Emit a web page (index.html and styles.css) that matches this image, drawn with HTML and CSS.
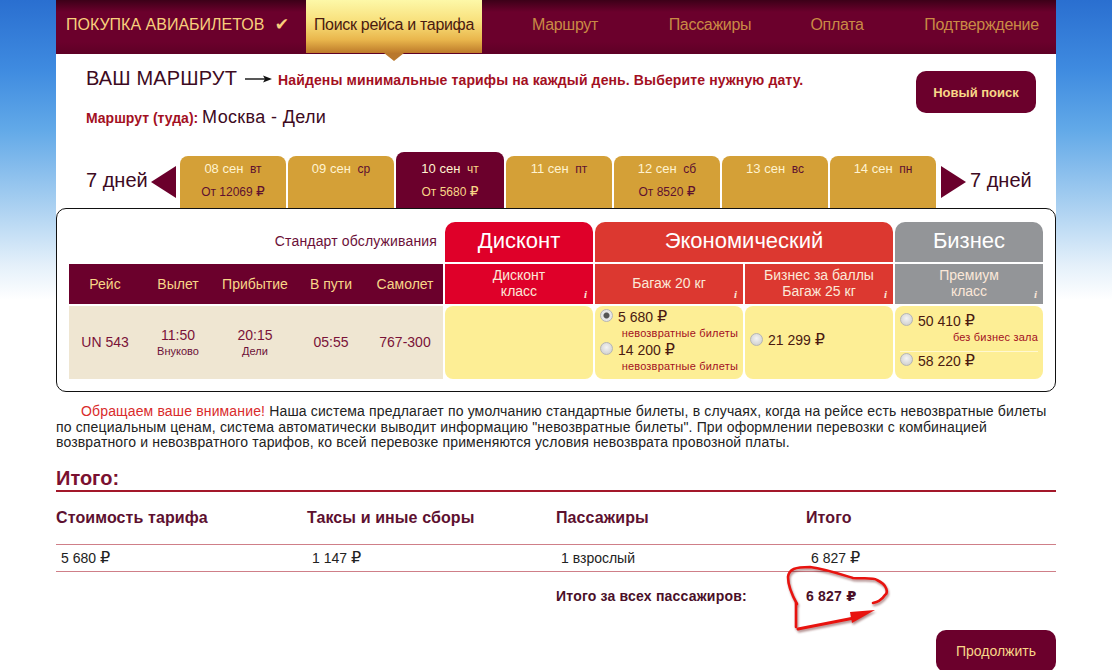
FILE: index.html
```html
<!DOCTYPE html>
<html lang="ru">
<head>
    <meta charset="UTF-8">
    <meta name="viewport" content="width=device-width, initial-scale=1.0">
    <title>Покупка авиабилетов</title>
    <link rel="stylesheet" href="styles.css">
</head>
<body>
    <div class="page">
        <nav class="steps">
            <div class="brand">ПОКУПКА АВИАБИЛЕТОВ <span class="check">✔</span></div>
            <div class="step step-active">Поиск рейса и тарифа</div>
            <div class="step step-route">Маршрут</div>
            <div class="step step-pass">Пассажиры</div>
            <div class="step step-pay">Оплата</div>
            <div class="step step-done">Подтверждение</div>
        </nav>

        <section class="route">
            <div class="route-info">
                <div class="route-title">
                    <h1>ВАШ МАРШРУТ</h1>
                    <svg class="long-arrow" width="27" height="10" viewBox="0 0 27 10">
                        <path d="M0 5H20" stroke="#111" stroke-width="1.4"/>
                        <path d="M18 1.5L27 5L18 8.5L20 5Z" fill="#111"/>
                    </svg>
                    <p class="route-note">Найдены минимальные тарифы на каждый день. Выберите нужную дату.</p>
                </div>
                <div class="route-line"><b>Маршрут (туда):</b> <span>Москва - Дели</span></div>
            </div>
            <button type="button" class="btn btn-new">Новый поиск</button>
        </section>

        <section class="days">
            <span class="days-label">7 дней</span>
            <span class="tri tri-left"></span>
            <div class="day-tabs">
                <div class="day"><div class="day-date">08 сен <em>вт</em></div><div class="day-price">От 12069 <i class="rub">₽</i></div></div>
                <div class="day"><div class="day-date">09 сен <em>ср</em></div></div>
                <div class="day day-active"><div class="day-date">10 сен <em>чт</em></div><div class="day-price">От 5680 <i class="rub">₽</i></div></div>
                <div class="day"><div class="day-date">11 сен <em>пт</em></div></div>
                <div class="day"><div class="day-date">12 сен <em>сб</em></div><div class="day-price">От 8520 <i class="rub">₽</i></div></div>
                <div class="day"><div class="day-date">13 сен <em>вс</em></div></div>
                <div class="day"><div class="day-date">14 сен <em>пн</em></div></div>
            </div>
            <span class="tri tri-right"></span>
            <span class="days-label days-label-right">7 дней</span>
        </section>

        <section class="board">
            <div class="service-label">Стандарт обслуживания</div>
            <div class="cabin cabin-discount">Дисконт</div>
            <div class="cabin cabin-eco">Экономический</div>
            <div class="cabin cabin-biz">Бизнес</div>

            <div class="flight-head flight-cols">
                <span>Рейс</span><span>Вылет</span><span>Прибытие</span><span>В пути</span><span>Самолет</span>
            </div>
            <div class="fare fare-discount"><span>Дисконт<br>класс</span><i class="info">i</i></div>
            <div class="fare fare-eco"><span>Багаж 20 кг</span><i class="info">i</i></div>
            <div class="fare fare-eco"><span>Бизнес за баллы<br>Багаж 25 кг</span><i class="info">i</i></div>
            <div class="fare fare-biz"><span>Премиум<br>класс</span><i class="info">i</i></div>

            <div class="flight-row flight-cols">
                <span>UN 543</span>
                <span>11:50<small>Внуково</small></span>
                <span>20:15<small>Дели</small></span>
                <span>05:55</span>
                <span>767-300</span>
            </div>
            <div class="cell"></div>
            <div class="cell cell-two">
                <label class="opt"><input type="radio" name="fare" checked><span>5 680 <i class="rub">₽</i></span></label>
                <div class="opt-note">невозвратные билеты</div>
                <label class="opt"><input type="radio" name="fare"><span>14 200 <i class="rub">₽</i></span></label>
                <div class="opt-note">невозвратные билеты</div>
            </div>
            <div class="cell cell-one">
                <label class="opt"><input type="radio" name="fare"><span>21 299 <i class="rub">₽</i></span></label>
            </div>
            <div class="cell cell-biz">
                <div class="biz-top">
                    <label class="opt"><input type="radio" name="fare"><span>50 410 <i class="rub">₽</i></span></label>
                    <div class="opt-note">без бизнес зала</div>
                </div>
                <label class="opt"><input type="radio" name="fare"><span>58 220 <i class="rub">₽</i></span></label>
            </div>
        </section>

        <p class="notice"><span>Обращаем ваше внимание!</span> Наша система предлагает по умолчанию стандартные билеты, в случаях, когда на рейсе есть невозвратные билеты по специальным ценам, система автоматически выводит информацию "невозвратные билеты". При оформлении перевозки с комбинацией возвратного и невозвратного тарифов, ко всей перевозке применяются условия невозврата провозной платы.</p>

        <section class="total">
            <h2>Итого:</h2>
            <div class="total-cols total-head">
                <span>Стоимость тарифа</span><span>Таксы и иные сборы</span><span>Пассажиры</span><span>Итого</span>
            </div>
            <div class="total-cols total-row">
                <span>5 680 <i class="rub">₽</i></span><span>1 147 <i class="rub">₽</i></span><span>1 взрослый</span><span>6 827 <i class="rub">₽</i></span>
            </div>
            <div class="total-cols total-sum">
                <span></span><span></span><span>Итого за всех пассажиров:</span><span class="sum-value">6 827 <i class="rub">₽</i></span>
            </div>
            <svg class="scribble" width="110" height="78" viewBox="0 0 110 78">
                <path d="M17 47C12 38 8 30 8 20C9 12 15 10 30 10C45 12 60 17 73 21C82 22 92 20 97 23C108 28 108 36 105 38C101 44 97 45 93 46" fill="none" stroke="#e8130f" stroke-width="2.6" stroke-linecap="round"/>
                <path d="M16 46V70" fill="none" stroke="#e8130f" stroke-width="2.6" stroke-linecap="round"/>
                <path d="M18 72L74 61" fill="none" stroke="#e8130f" stroke-width="3" stroke-linecap="round"/>
                <path d="M70 55L95 53L72 66Z" fill="#e8130f"/>
            </svg>
            <div class="total-actions">
                <button type="button" class="btn btn-next">Продолжить</button>
            </div>
        </section>
    </div>
</body>
</html>
```

FILE: styles.css
```css
* {
    box-sizing: border-box;
    margin: 0;
    padding: 0;
}

html, body {
    height: 100%;
}

body {
    background: #fff linear-gradient(180deg, #2a6fd0 0, #3f8be0 70px, #62a9e8 130px, #a4cdf0 200px, #e4f0fa 265px, #fff 300px) no-repeat;
    background-size: 100% 300px;
    font-family: "Liberation Sans", Arial, sans-serif;
    color: #222;
    overflow: hidden;
}

.page {
    width: 1000px;
    min-height: 670px;
    margin: 0 auto;
    background: #fff;
}

.rub {
    font-family: "DejaVu Sans", sans-serif;
    font-style: normal;
    font-weight: normal;
    font-size: 1.15em;
    line-height: 1;
}

/* top steps */
.steps {
    position: relative;
    display: flex;
    height: 54px;
    background: linear-gradient(180deg, #3c0018 0, #6b002c 12px, #6b002c 42px, #5e0026 54px);
    font-size: 16px;
    line-height: 49px;
    color: #c98a45;
}

.brand {
    width: 250px;
    padding-left: 10px;
    color: #f8cf7c;
    white-space: nowrap;
}

.check {
    margin-left: 6px;
    font-family: "DejaVu Sans", sans-serif;
    font-size: 17px;
}

.step {
    letter-spacing: -0.3px;
    text-align: center;
    white-space: nowrap;
}

.step-active {
    position: relative;
    width: 176px;
    height: 53px;
    color: #4a1a10;
    background: linear-gradient(180deg, #fdf8a8 0, #f8e07c 40%, #e9b64c 75%, #bd7a2a 100%);
}

.step-active::after {
    content: "";
    position: absolute;
    left: 78px;
    top: 53px;
    border-left: 10px solid transparent;
    border-right: 10px solid transparent;
    border-top: 8px solid #b9782c;
}

.step-route { width: 166px; }
.step-pass { width: 124px; }
.step-pay { width: 130px; }
.step-done { width: 154px; padding-left: 5px; }

/* route */
.route {
    display: flex;
    justify-content: space-between;
    height: 98px;
    padding: 12px 20px 0 30px;
}

.route-title {
    display: flex;
    align-items: center;
    height: 24px;
}

.route-title h1 {
    font-size: 20px;
    font-weight: normal;
    color: #3d0a22;
    letter-spacing: 0.15px;
}

.long-arrow {
    margin: 2px 6px 0 8px;
}

.route-note {
    margin-top: 4px;
    font-size: 14px;
    font-weight: bold;
    color: #a3101f;
    letter-spacing: 0.12px;
    white-space: nowrap;
}

.route-line {
    margin-top: 15px;
    line-height: 24px;
    font-size: 14px;
    color: #a3101f;
}

.route-line span {
    font-size: 18px;
    letter-spacing: 0.35px;
    color: #3d0a22;
}

.btn {
    border: none;
    background: #6b002c;
    color: #f8d688;
    font-family: inherit;
    font-size: 14px;
    cursor: pointer;
}

.btn-new {
    width: 120px;
    height: 42px;
    margin-top: 5px;
    border-radius: 10px;
    font-weight: bold;
    font-size: 13px;
}

/* days */
.days {
    display: flex;
    align-items: flex-end;
    height: 56px;
    padding-left: 30px;
}

.days-label {
    align-self: center;
    width: 65px;
    font-size: 20px;
    color: #3d0a22;
    white-space: nowrap;
}

.days-label-right {
    margin-left: 4px;
}

.tri {
    align-self: center;
    margin-top: 4px;
    border-top: 16px solid transparent;
    border-bottom: 16px solid transparent;
}

.tri-left {
    border-right: 25px solid #6b002c;
}

.tri-right {
    margin-left: 5px;
    border-left: 25px solid #6b002c;
}

.day-tabs {
    display: flex;
    gap: 2px;
    align-items: flex-end;
    margin-left: 4px;
}

.day {
    width: 106px;
    height: 52px;
    padding-top: 5px;
    border-radius: 8px 8px 0 0;
    background: #d4a037;
    color: #fff3d0;
    font-size: 13px;
    text-align: center;
    line-height: 16px;
}

.day em {
    margin-left: 3px;
    font-size: 12px;
    font-style: normal;
    color: #5d1030;
}

.day-price {
    margin-top: 7px;
    font-size: 12px;
    color: #5d1030;
}

.day-active {
    width: 108px;
    height: 56px;
    padding-top: 9px;
    background: #6b002c;
}

.day-active em,
.day-active .day-price {
    color: #f8d688;
}

/* fare table */
.board {
    display: grid;
    grid-template-columns: 374px repeat(4, 148px);
    grid-template-rows: 40px 40px 73px;
    column-gap: 2px;
    row-gap: 2px;
    height: 184px;
    padding: 13px 12px 0;
    border: 1px solid #111;
    border-radius: 10px;
    background: #fff;
}

.service-label {
    padding-right: 6px;
    line-height: 39px;
    font-size: 14px;
    letter-spacing: 0.15px;
    text-align: right;
    color: #6b1038;
}

.cabin {
    color: #fff;
    font-size: 22px;
    line-height: 38px;
    text-align: center;
    border-radius: 10px 10px 0 0;
}

.cabin-discount { background: #df0029; }
.cabin-eco { grid-column: span 2; background: #dc3830; }
.cabin-biz { background: #939598; }

.flight-cols {
    display: grid;
    grid-template-columns: 72px 74px 80px 72px 76px;
    text-align: center;
}

.flight-head {
    background: #6b002c;
    color: #f8d688;
    font-size: 14px;
    line-height: 40px;
}

.fare {
    position: relative;
    display: flex;
    align-items: center;
    justify-content: center;
    padding-bottom: 2px;
    color: #fbe8d8;
    font-size: 14px;
    line-height: 16px;
    text-align: center;
}

.fare-discount { background: #df0029; }
.fare-eco { background: #dc3830; }
.fare-biz { background: #939598; }

.info {
    position: absolute;
    right: 6px;
    bottom: 2px;
    font-family: "Liberation Serif", serif;
    font-size: 11px;
    font-weight: bold;
}

.flight-row {
    align-items: center;
    background: #efe6d2;
    color: #7a1238;
    font-size: 14px;
    line-height: 17px;
}

.flight-row small {
    display: block;
    font-size: 11px;
    line-height: 14px;
    color: #6b1038;
}

.cell {
    padding: 2px 5px 0;
    border-radius: 8px;
    background: #fdee95;
    color: #4a1a10;
}

.opt {
    display: flex;
    align-items: center;
    height: 18px;
    font-size: 14px;
    white-space: nowrap;
}

.opt input {
    appearance: none;
    flex: none;
    width: 13px;
    height: 13px;
    margin: -3px 5px 0 0;
    border: 1px solid #b5b5b5;
    border-radius: 50%;
    background: radial-gradient(circle at 50% 40%, #f4f4f4, #c8c8c8);
}

.opt input:checked {
    background: radial-gradient(circle, #555 0, #555 2.5px, #e6e6e6 3.5px);
}

.opt-note {
    font-size: 11px;
    line-height: 14px;
    color: #a3101f;
    text-align: right;
    letter-spacing: 0.2px;
}

.cell-one {
    display: flex;
    align-items: center;
    padding-bottom: 6px;
}

.cell-two .opt-note {
    margin-bottom: 1px;
}

.biz-top {
    height: 40px;
    border-bottom: 1px solid #fff8d0;
}

.biz-top .opt {
    margin-top: 4px;
}

/* notice */
.notice {
    margin-top: 12px;
    font-size: 14px;
    line-height: 15.5px;
    letter-spacing: 0.15px;
    text-indent: 25px;
    color: #222;
}

.notice span {
    color: #d92b2b;
}

/* totals */
.total {
    position: relative;
}

.total h2 {
    margin-top: 15px;
    border-bottom: 2px solid #a3182a;
    font-size: 20px;
    line-height: 24px;
    color: #7a1030;
}

.total-cols {
    display: grid;
    grid-template-columns: 251px 249px 250px 250px;
}

.total-head {
    height: 52px;
    line-height: 52px;
    font-size: 16px;
    letter-spacing: 0.1px;
    font-weight: bold;
    color: #5d1030;
}

.total-row {
    height: 28px;
    border-top: 1px solid #cf7f88;
    border-bottom: 1px solid #cf7f88;
    padding-left: 5px;
    line-height: 26px;
    font-size: 14px;
}

.total-sum {
    height: 46px;
    line-height: 49px;
    font-size: 14px;
    letter-spacing: 0.2px;
    font-weight: bold;
    color: #4a0f28;
}

.sum-value .rub {
    font-weight: bold;
    font-size: 1.05em;
}

.scribble {
    position: absolute;
    left: 724px;
    top: 91px;
    filter: drop-shadow(1px 2px 1px rgba(80, 0, 0, 0.45));
}

.total-actions {
    display: flex;
    justify-content: flex-end;
    margin-top: 12px;
}

.btn-next {
    width: 120px;
    height: 42px;
    border-radius: 10px;
}
```
